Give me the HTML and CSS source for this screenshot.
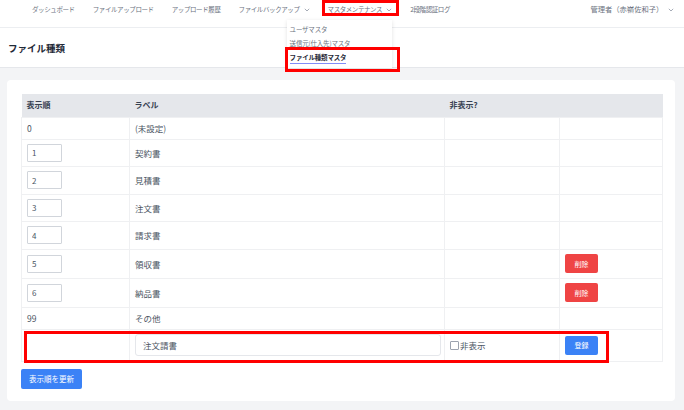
FILE: index.html
```html
<!DOCTYPE html>
<html lang="ja">
<head>
<meta charset="utf-8">
<title>ファイル種類</title>
<link rel="stylesheet" href="styles.css">
</head>
<body>
<nav class="topnav">
  <ul class="menu">
    <li class="menu-item">ダッシュボード</li>
    <li class="menu-item">ファイルアップロード</li>
    <li class="menu-item">アップロード履歴</li>
    <li class="menu-item">ファイルバックアップ <svg class="chev" viewBox="0 0 6 4" width="6" height="4"><path d="M0.8 0.8 L3 3 L5.2 0.8" fill="none" stroke="currentColor" stroke-width="0.9"/></svg></li>
    <li class="menu-item annotated">マスタメンテナンス <svg class="chev" viewBox="0 0 6 4" width="6" height="4"><path d="M0.8 0.8 L3 3 L5.2 0.8" fill="none" stroke="currentColor" stroke-width="0.9"/></svg>
      <div class="dropdown">
        <div class="dd-item">ユーザマスタ</div>
        <div class="dd-item">送信元(仕入先)マスタ</div>
        <div class="dd-item current"><span class="dd-underline">ファイル種類マスタ</span></div>
      </div>
    </li>
    <li class="menu-item">2段階認証ログ</li>
  </ul>
  <div class="user">管理者（赤嶺佐和子） <svg class="chev" viewBox="0 0 6 4" width="6" height="4"><path d="M0.8 0.8 L3 3 L5.2 0.8" fill="none" stroke="currentColor" stroke-width="0.9"/></svg></div>
</nav>

<header class="page-header">
  <h1 class="page-title">ファイル種類</h1>
</header>

<main class="main">
  <section class="card">
    <div class="table-wrap">
      <table class="grid">
        <colgroup>
          <col class="c1"><col class="c2"><col class="c3"><col class="c4">
        </colgroup>
        <thead>
          <tr><th>表示順</th><th>ラベル</th><th>非表示?</th><th></th></tr>
        </thead>
        <tbody>
          <tr class="text-row"><td>0</td><td>(未設定)</td><td></td><td></td></tr>
          <tr class="in-row"><td><input class="num" value="1"></td><td>契約書</td><td></td><td></td></tr>
          <tr class="in-row"><td><input class="num" value="2"></td><td>見積書</td><td></td><td></td></tr>
          <tr class="in-row"><td><input class="num" value="3"></td><td>注文書</td><td></td><td></td></tr>
          <tr class="in-row"><td><input class="num" value="4"></td><td>請求書</td><td></td><td></td></tr>
          <tr class="del-row"><td><input class="num" value="5"></td><td>領収書</td><td></td><td><button class="btn btn-red">削除</button></td></tr>
          <tr class="del-row"><td><input class="num" value="6"></td><td>納品書</td><td></td><td><button class="btn btn-red">削除</button></td></tr>
          <tr class="text-row"><td>99</td><td>その他</td><td></td><td></td></tr>
          <tr class="new-row">
            <td></td>
            <td><input class="label-input" value="注文請書"></td>
            <td><label class="chk"><input type="checkbox" class="box">非表示</label></td>
            <td><button class="btn btn-blue">登録</button></td>
          </tr>
        </tbody>
      </table>
      <div class="annot-row"></div>
    </div>
    <button class="btn btn-blue btn-update">表示順を更新</button>
  </section>
</main>
</body>
</html>
```

FILE: styles.css
```css
* { box-sizing: border-box; }
html, body { margin: 0; padding: 0; }
body {
  background: #f3f4f6;
  font-family: "Noto Sans CJK JP", "Noto Sans", sans-serif;
  color: #4b5563;
  width: 684px;
  height: 410px;
  overflow: hidden;
}

/* top navigation */
.topnav {
  height: 28px;
  background: #fff;
  border-bottom: 1px solid #eceef1;
  display: flex;
  justify-content: space-between;
  align-items: flex-start;
  padding: 4px 10px 0 32px;
  font-size: 6.5px;
  letter-spacing: -0.4px;
  line-height: 10px;
  color: #6b7280;
}
.menu {
  list-style: none;
  margin: 0;
  padding: 0;
  display: flex;
  gap: 18px;
}
.menu-item {
  position: relative;
  white-space: nowrap;
}
.chev { vertical-align: middle; margin-left: 3px; color: #9ca3af; }
.annotated::after {
  content: "";
  position: absolute;
  left: -6px;
  right: -7px;
  top: -4px;
  bottom: -2px;
  border: 3px solid #f00;
}
.dropdown {
  position: absolute;
  top: 16px;
  left: -41px;
  width: 105px;
  background: #fff;
  box-shadow: 0 1px 4px rgba(0,0,0,0.12);
  padding: 2px 0 4px;
  z-index: 5;
  letter-spacing: -0.2px;
}
.dd-item {
  padding-left: 3px;
  line-height: 14px;
  color: #6b7280;
}
.dd-item.current {
  position: relative;
  color: #1f2937;
  font-weight: 700;
}
.dd-underline { border-bottom: 1px solid #818cf8; padding-bottom: 1px; }
.dd-item.current::after {
  content: "";
  position: absolute;
  left: -2px;
  right: -8px;
  top: -3px;
  bottom: -8px;
  border: 3px solid #f00;
}
.user {
  white-space: nowrap;
  font-size: 7.3px;
  letter-spacing: 0;
}

/* page header */
.page-header {
  height: 40px;
  background: #fff;
  border-bottom: 1px solid #e5e7eb;
  display: flex;
  align-items: center;
  padding-left: 8px;
}
.page-title {
  margin: 0;
  font-size: 9.5px;
  font-weight: 700;
  color: #1f2937;
}

/* main */
.main { padding: 12px 9px 0 7px; }
.card {
  background: #fff;
  border-radius: 4px;
  padding: 14px 13px 12px 14px;
}
.table-wrap { position: relative; }
.grid {
  width: 641px;
  table-layout: fixed;
  border-collapse: collapse;
  font-size: 8.5px;
  line-height: 12px;
}
.c1 { width: 108px; }
.c2 { width: 315px; }
.c3 { width: 115px; }
.c4 { width: 103px; }
.grid th {
  background: #e5e7eb;
  height: 23px;
  text-align: left;
  padding: 0 5px;
  font-weight: 700;
  color: #374151;
  font-size: 8px;
}
.grid td {
  border: 1px solid #eff0f2;
  padding: 4px 5px;
  vertical-align: middle;
  color: #4b5563;
}
.grid tr.text-row td { height: 22px; }
.grid tr.in-row td { height: 27.5px; }
.grid tr.del-row td { height: 29px; }
.grid tr.new-row td { height: 32px; }

.num {
  display: block;
  width: 35px;
  height: 18px;
  border: 1px solid #d1d5db;
  border-radius: 1px;
  padding: 0 4px;
  font: inherit;
  font-size: 8px;
  color: #4b5563;
}
.label-input {
  display: block;
  width: 306px;
  height: 22px;
  border: 1px solid #e5e7eb;
  border-radius: 3px;
  padding: 0 7px;
  font: inherit;
  font-size: 8.5px;
  color: #4b5563;
}
.chk { display: flex; align-items: center; gap: 1px; color: #4b5563; }
.box {
  appearance: none;
  -webkit-appearance: none;
  width: 9px;
  height: 9px;
  margin: 0;
  border: 1px solid #9ca3af;
  border-radius: 1px;
  background: #fff;
}

.btn {
  border: none;
  border-radius: 2px;
  color: #fff;
  font-family: inherit;
  font-size: 7px;
  padding: 0;
  display: block;
  width: 33px;
  height: 19px;
}
.btn-red { background: #ef4444; }
.btn-blue { background: #3b82f6; }
.btn-update {
  margin-top: 7px;
  width: 61px;
  height: 20px;
  font-size: 7.5px;
}
.annot-row {
  position: absolute;
  left: 3px;
  top: 237px;
  width: 585px;
  height: 32px;
  border: 3px solid #f00;
  pointer-events: none;
}
```
